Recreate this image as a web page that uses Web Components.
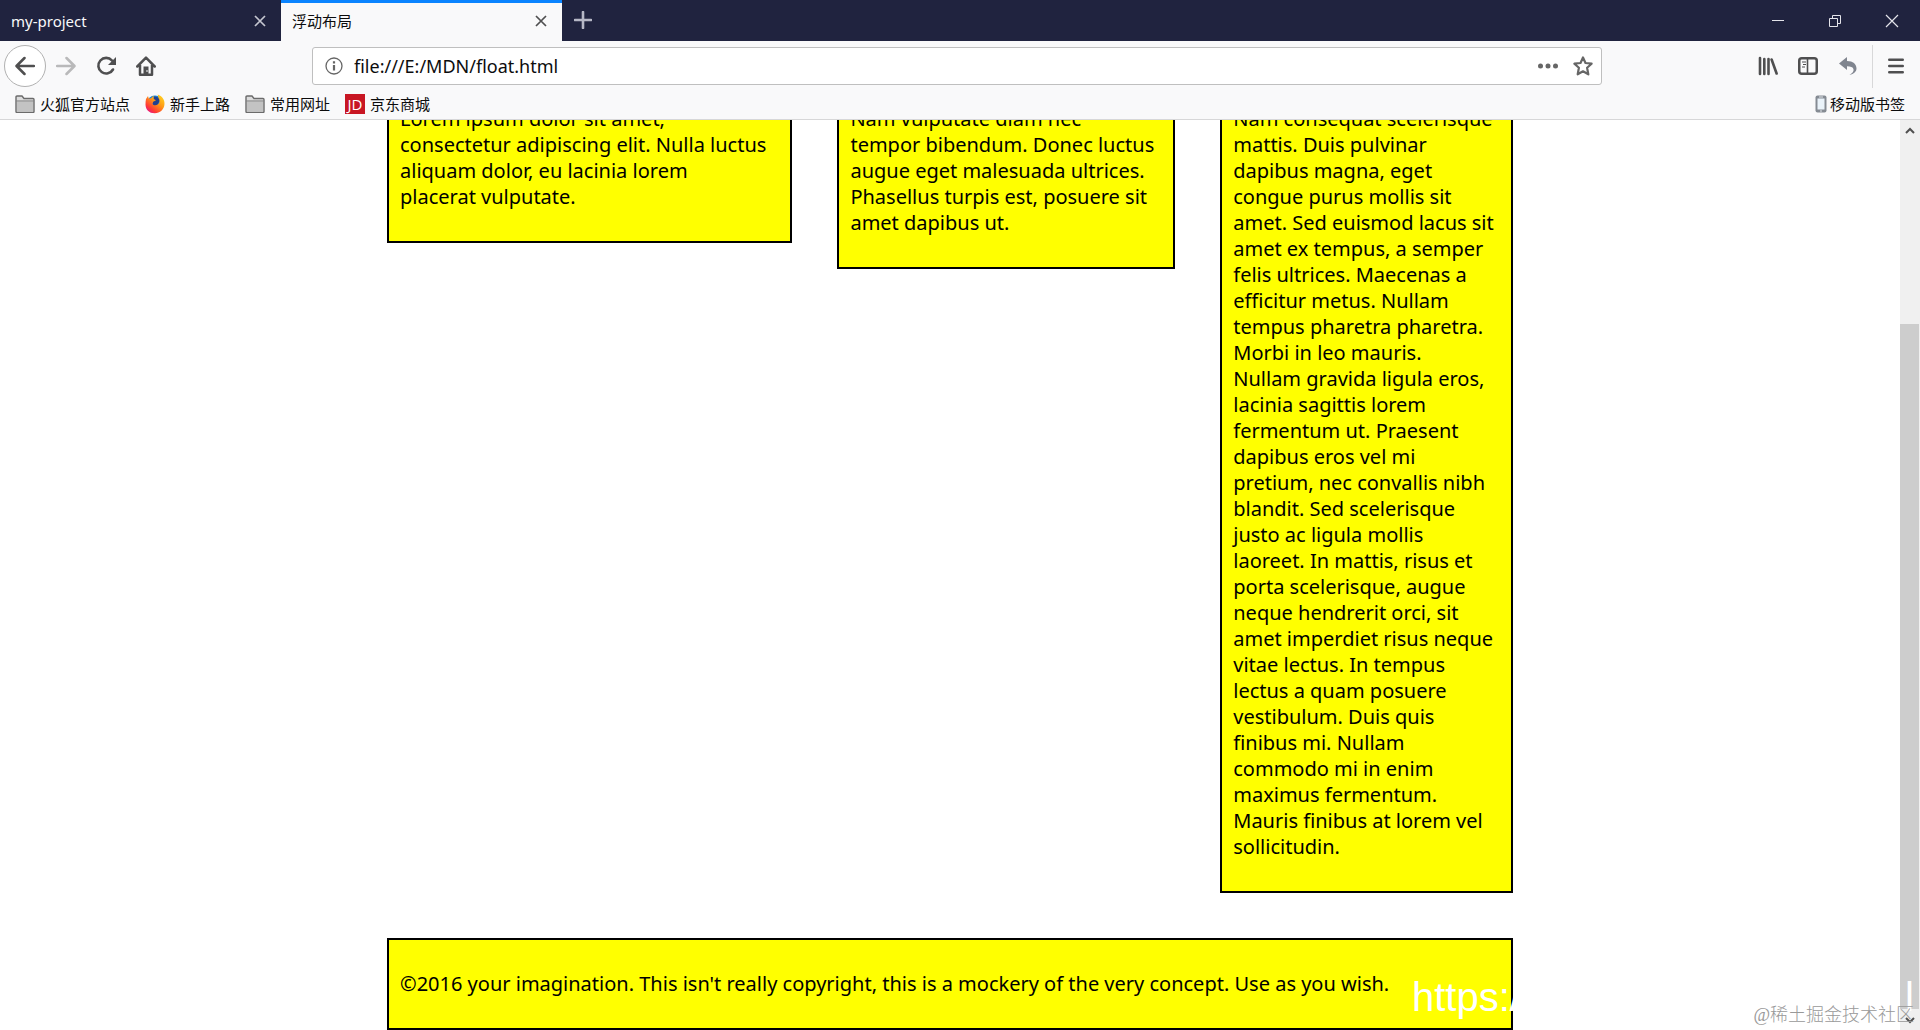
<!DOCTYPE html>
<html lang="zh-CN">
<head>
    <meta charset="utf-8"/>
    <title>浮动布局</title>
    <style>
      body {
        margin: 0;
        font-family: "Noto Sans", "Noto Sans CJK SC", sans-serif;
      }
    </style>
</head>
<body>
    <browser-window></browser-window>

<script>
const icons = {
  close: '<svg width="12" height="12" viewBox="0 0 12 12"><path d="M1 1l10 10M11 1L1 11" stroke="currentColor" stroke-width="1.7" fill="none"/></svg>',
  plus: '<svg width="18" height="18" viewBox="0 0 18 18"><path d="M9 1v16M1 9h16" stroke="currentColor" stroke-width="2.6" stroke-linecap="round"/></svg>',
  minimize: '<svg width="14" height="14" viewBox="0 0 14 14"><path d="M1 6.5h12" stroke="currentColor"/></svg>',
  restore: '<svg width="14" height="14" viewBox="0 0 14 14"><path d="M1.500 4.500h8v8h-8zM4.500 4.500v-3h8v8h-3" stroke="currentColor" fill="none"/></svg>',
  exit: '<svg width="14" height="14" viewBox="0 0 14 14"><path d="M1 1l12 12M13 1L1 13" stroke="currentColor" stroke-width="1.2"/></svg>',
  back: '<svg width="20" height="20" viewBox="0 0 20 20"><path d="M19 10H2M9.500 2L1.500 10l8 8" stroke="currentColor" stroke-width="2.500" fill="none" stroke-linecap="round" stroke-linejoin="round"/></svg>',
  forward: '<svg width="20" height="20" viewBox="0 0 20 20"><path d="M1 10h17M10.500 2l8 8-8 8" stroke="currentColor" stroke-width="2.500" fill="none" stroke-linecap="round" stroke-linejoin="round"/></svg>',
  reload: '<svg width="20" height="20" viewBox="0 0 20 20"><path d="M17 13.500A7.800 7.800 0 1 1 16 4.500" stroke="currentColor" stroke-width="2.600" fill="none" stroke-linecap="round"/><path d="M20 1v8h-8z" fill="currentColor"/></svg>',
  home: '<svg width="20" height="20" viewBox="0 0 20 20"><path d="M1.300 10.500L10 1.700l8.700 8.800M4 9v9.700h12V9" stroke="currentColor" stroke-width="2.500" fill="none" stroke-linecap="round" stroke-linejoin="round"/><path d="M7.500 10.500h5V19h-5z" fill="currentColor"/><path d="M10.500 14h1v2h-1z" fill="#f9f9fa"/></svg>',
  info: '<svg width="18" height="18" viewBox="0 0 18 18"><circle cx="9" cy="9" r="8" stroke="currentColor" stroke-width="1.300" fill="none"/><path d="M9 8v5.500M9 4.300v2.200" stroke="currentColor" stroke-width="2.200"/></svg>',
  dots: '<svg width="20" height="20" viewBox="0 0 20 20"><g fill="currentColor"><circle cx="2.500" cy="10" r="2.500"/><circle cx="10" cy="10" r="2.500"/><circle cx="17.500" cy="10" r="2.500"/></g></svg>',
  star: '<svg width="20" height="20" viewBox="0 0 20 20"><path d="M10 1.500l2.500 5.500 6.100.700-4.500 4.100 1.200 6.500L10 15.300l-5.300 3 1.200-6.500L1.400 7.700l6.100-.700z" stroke="currentColor" stroke-width="2.200" fill="none" stroke-linejoin="round"/></svg>',
  library: '<svg width="20" height="20" viewBox="0 0 20 20"><path d="M2 2v16M6.300 3v15M10.500 3v15M13.600 3.500l5 14" stroke="currentColor" stroke-width="2.600" stroke-linecap="round"/></svg>',
  sidebar: '<svg width="20" height="18" viewBox="0 0 20 18"><rect x="1.250" y="1.250" width="17.500" height="15.500" rx="2.500" stroke="currentColor" stroke-width="2.500" fill="none"/><path d="M9.500 1v16" stroke="currentColor" stroke-width="1.600"/><path d="M4 5h4M5 7.500h3M4 10h3" stroke="currentColor" stroke-width="1.200"/></svg>',
  undo: '<svg width="20" height="20" viewBox="0 0 20 20"><path d="M1 7.500L9 1v4c6 0 9.500 3 9.500 7.500 0 3-2.500 5.500-7 6.500 3-2 4.500-3.500 4-5.800C15 11 12.500 10.300 9 10.300V14z" fill="#80858f"/></svg>',
  menu: '<svg width="16" height="16" viewBox="0 0 16 16"><path d="M1.200 1.700h13.600M1.200 8h13.600M1.200 14.300h13.600" stroke="currentColor" stroke-width="2.400" stroke-linecap="round"/></svg>',
  folder: '<svg width="20" height="18" viewBox="0 0 20 18"><path d="M1 16.500V2q0-1 1-1h5l2 2.500h9q1 0 1 1v12q0 1-1 1H2q-1 0-1-1z" fill="#dcdcdc" stroke="#6b6b6b" stroke-width="1.400"/><path d="M2 7h16v9.500H2z" fill="#c3c3c3"/><path d="M1.500 6h17" stroke="#777"/></svg>',
  firefox: '<svg width="20" height="20" viewBox="0 0 20 20"><defs><linearGradient id="f" x1="1" y1="0" x2="0.200" y2="1"><stop offset="0" stop-color="#ffe226"/><stop offset=".45" stop-color="#ff9a16"/><stop offset=".8" stop-color="#ff3a35"/><stop offset="1" stop-color="#e31587"/></linearGradient></defs><circle cx="10" cy="9.500" r="8" fill="#1684d8"/><path d="M9 2.500q4 0 6 3l-3 7-5 1z" fill="#23408e"/><path d="M1 5l2-3 .700 2.500L6 4.300 8.500 1.500 8.700 5l2.300 1.300-2.800 1.500-.7 2c1 2 3.500 2 5.500.5 2-1.700 2-4 .500-6.300L12.700.5c4.500 1.500 7 5 6.800 9.500-.3 5.500-4.500 9.300-9.700 9.300C4 19.300.5 15.500.5 10.500.5 8.500.700 6.500 1 5z" fill="url(#f)"/></svg>',
  phone: '<svg width="12" height="18" viewBox="0 0 12 18"><rect x=".5" y=".5" width="11" height="17" rx="2" fill="#858b93"/><path d="M2.500 3.500h7v11h-7z" fill="#eaf3fa"/><path d="M4 2h4M5 16h2" stroke="#dfe3e8"/></svg>',
  up: '<svg width="10" height="10" viewBox="0 0 10 10"><path d="M1 7l4-4 4 4" stroke="currentColor" stroke-width="2" fill="none"/></svg>',
  down: '<svg width="10" height="10" viewBox="0 0 10 10"><path d="M1 3l4 4 4-4" stroke="currentColor" stroke-width="2" fill="none"/></svg>'
};

// every element here only needs its markup stamped into an open root
function define(name, html) {
  const template = document.createElement('template');
  template.innerHTML = html;
  customElements.define(name, class extends HTMLElement {
    connectedCallback() {
      if (this.shadowRoot) return;
      this.attachShadow({ mode: 'open' });
      this.shadowRoot.appendChild(template.content.cloneNode(true));
    }
  });
}

class IconButton extends HTMLElement {
  connectedCallback() {
    if (this.shadowRoot) return;
    this.attachShadow({ mode: 'open' });
    this.shadowRoot.innerHTML = `
      <style>
        :host {
          display: flex;
          flex: none;
          width: 40px;
          height: 40px;
          color: #4f4f50;
        }
        button {
          display: flex;
          flex: 1;
          align-items: center;
          justify-content: center;
          padding: 0;
          border: 0;
          border-radius: inherit;
          background: none;
          color: inherit;
        }
      </style>
      <button type="button" aria-label="${this.getAttribute('label')}">${icons[this.getAttribute('icon')]}</button>`;
  }
}
customElements.define('icon-button', IconButton);

define('browser-tab', `
  <style>
    :host {
      display: flex;
      box-sizing: border-box;
      width: 281px;
      align-items: center;
      padding: 0 11px;
      font-size: 15px;
      line-height: 20px;
      color: #f9f9fa;
    }
    :host([active]) {
      border-top: 3px solid #0a84ff;
      padding-bottom: 3px;
      background: #f9f9fa;
      color: #0c0c0d;
    }
    span {
      flex: 1;
    }
    icon-button {
      width: 20px;
      height: 20px;
      color: #c5c6d0;
    }
    :host([active]) icon-button {
      color: #4f4f50;
    }
  </style>
  <span><slot></slot></span>
  <icon-button icon="close" label="关闭标签页"></icon-button>`);

define('tab-strip', `
  <style>
    :host {
      display: flex;
      height: 41px;
      background: #20233f;
    }
    icon-button {
      height: 100%;
      color: #e4e4ea;
    }
    .new {
      width: 42px;
      padding-bottom: 1px;
      box-sizing: border-box;
      color: #b6b7c6;
    }
    .controls {
      display: flex;
      margin-left: auto;
    }
    .controls icon-button {
      width: 57px;
    }
  </style>
  <browser-tab>my-project</browser-tab>
  <browser-tab active>浮动布局</browser-tab>
  <icon-button class="new" icon="plus" label="新标签页"></icon-button>
  <div class="controls">
    <icon-button icon="minimize" label="最小化"></icon-button>
    <icon-button icon="restore" label="还原"></icon-button>
    <icon-button icon="exit" label="关闭"></icon-button>
  </div>`);

define('address-bar', `
  <style>
    :host {
      display: flex;
      flex: 1;
      box-sizing: border-box;
      height: 38px;
      align-items: center;
      padding: 0 1px 0 6px;
      border: 1px solid #bfbfbf;
      border-radius: 3px;
      background: #fff;
    }
    icon-button {
      width: 35px;
      height: 30px;
      color: #666;
    }
    icon-button[icon="info"] {
      width: 30px;
    }
    input {
      flex: 1;
      min-width: 0;
      padding: 0 5px;
      border: 0;
      outline: 0;
      background: none;
      font: 18px/24px "Noto Sans", sans-serif;
      color: #0c0c0d;
    }
  </style>
  <icon-button icon="info" label="网站信息"></icon-button>
  <input type="text" aria-label="地址" value="file:///E:/MDN/float.html">
  <icon-button icon="dots" label="页面操作"></icon-button>
  <icon-button icon="star" label="添加书签"></icon-button>`);

define('nav-bar', `
  <style>
    :host {
      display: flex;
      height: 50px;
      align-items: center;
      padding: 0 4px;
    }
    .back {
      box-sizing: border-box;
      width: 42px;
      height: 42px;
      border: 1px solid #b1b1b1;
      border-radius: 50%;
      background: #fff;
    }
    .off {
      color: #b9b9ba;
    }
    address-bar {
      margin: 0 146px;
    }
    hr {
      width: 1px;
      height: 43px;
      margin: 0 3px 0 4px;
      border: 0;
      background: #d8d8d9;
    }
  </style>
  <icon-button class="back" icon="back" label="后退"></icon-button>
  <icon-button class="off" icon="forward" label="前进"></icon-button>
  <icon-button icon="reload" label="刷新"></icon-button>
  <icon-button icon="home" label="主页"></icon-button>
  <address-bar></address-bar>
  <icon-button icon="library" label="我的足迹"></icon-button>
  <icon-button icon="sidebar" label="侧栏"></icon-button>
  <icon-button icon="undo" label="撤销"></icon-button>
  <hr>
  <icon-button icon="menu" label="打开菜单"></icon-button>`);

define('bookmarks-bar', `
  <style>
    :host {
      display: flex;
      box-sizing: border-box;
      height: 29px;
      align-items: center;
      gap: 15px;
      padding: 0 15px 3px;
      border-bottom: 1px solid #d7d7d8;
      font-size: 15px;
      line-height: 20px;
    }
    a {
      display: flex;
      align-items: center;
      gap: 5px;
      color: #0c0c0d;
      text-decoration: none;
    }
    .mobile {
      margin-left: auto;
      gap: 3px;
    }
    .jd {
      width: 20px;
      background: #c81623;
      color: #fff;
      font: 15px/20px "Open Sans", sans-serif;
      text-align: center;
    }
  </style>
  <a href="#">${icons.folder}火狐官方站点</a>
  <a href="#">${icons.firefox}新手上路</a>
  <a href="#">${icons.folder}常用网址</a>
  <a href="#"><span class="jd">JD</span>京东商城</a>
  <a href="#" class="mobile">${icons.phone}移动版书签</a>`);

define('scroll-bar', `
  <style>
    :host {
      display: flex;
      flex-direction: column;
      width: 20px;
      background: #f0f0f0;
    }
    icon-button {
      width: 20px;
      height: 21px;
      color: #505050;
    }
    .before {
      flex: 183;
    }
    .thumb {
      flex: 686;
      margin-right: 1px;
      background: #cdcdcd;
    }
  </style>
  <icon-button icon="up" label="向上滚动"></icon-button>
  <div class="before"></div>
  <div class="thumb"></div>
  <icon-button icon="down" label="向下滚动"></icon-button>`);

define('text-box', `
  <style>
    :host {
      display: block;
      box-sizing: border-box;
      padding: 11px;
      border: 2px solid #000;
      background: #ff0;
      font-size: 20px;
      line-height: 26px;
      color: #000;
    }
    p {
      margin: 20px 0;
    }
  </style>
  <p><slot></slot></p>`);

define('float-page', `
  <style>
    :host {
      display: flex;
      flex-direction: column;
      justify-content: flex-end;
      align-items: center;
      overflow: hidden;
      background: #fff;
    }
    main {
      display: flex;
      flex-direction: column;
      gap: 45px;
      width: 90%;
      max-width: 1126px;
    }
    .columns {
      display: flex;
      justify-content: space-between;
      align-items: flex-start;
    }
    .one { width: 36%; }
    .two { width: 30%; }
    .three { width: 26%; }
  </style>
  <main>
    <div class="columns">
      <text-box class="one">Lorem ipsum dolor sit amet,<br>consectetur adipiscing elit. Nulla luctus<br>aliquam dolor, eu lacinia lorem<br>placerat vulputate.</text-box>
      <text-box class="two">Nam vulputate diam nec<br>tempor bibendum. Donec luctus<br>augue eget malesuada ultrices.<br>Phasellus turpis est, posuere sit<br>amet dapibus ut.</text-box>
      <text-box class="three">Nam consequat scelerisque<br>mattis. Duis pulvinar<br>dapibus magna, eget<br>congue purus mollis sit<br>amet. Sed euismod lacus sit<br>amet ex tempus, a semper<br>felis ultrices. Maecenas a<br>efficitur metus. Nullam<br>tempus pharetra pharetra.<br>Morbi in leo mauris.<br>Nullam gravida ligula eros,<br>lacinia sagittis lorem<br>fermentum ut. Praesent<br>dapibus eros vel mi<br>pretium, nec convallis nibh<br>blandit. Sed scelerisque<br>justo ac ligula mollis<br>laoreet. In mattis, risus et<br>porta scelerisque, augue<br>neque hendrerit orci, sit<br>amet imperdiet risus neque<br>vitae lectus. In tempus<br>lectus a quam posuere<br>vestibulum. Duis quis<br>finibus mi. Nullam<br>commodo mi in enim<br>maximus fermentum.<br>Mauris finibus at lorem vel<br>sollicitudin.</text-box>
    </div>
    <text-box>©2016 your imagination. This isn't really copyright, this is a mockery of the very concept. Use as you wish.</text-box>
  </main>`);

define('page-watermark', `
  <style>
    :host {
      position: absolute;
      right: 6px;
      bottom: 2px;
      width: 502px;
      pointer-events: none;
    }
    .url {
      display: flex;
      justify-content: space-between;
      padding-bottom: 8px;
      font: 40px/46px "Liberation Sans", sans-serif;
      color: #fff;
    }
    .site {
      position: absolute;
      right: 0;
      bottom: 0;
      font: 18px/26px "Liberation Serif", "Noto Sans CJK SC", serif;
      font-weight: 300;
      color: #999;
      white-space: nowrap;
    }
  </style>
  <div class="url"><span>https:/</span><span>l</span></div>
  <div class="site">@稀土掘金技术社区</div>`);

define('browser-window', `
  <style>
    :host {
      position: relative;
      display: flex;
      flex-direction: column;
      height: 100vh;
      overflow: hidden;
      background: #f9f9fa;
    }
    .view {
      display: flex;
      flex: 1;
      min-height: 0;
    }
    float-page {
      flex: 1;
    }
  </style>
  <tab-strip></tab-strip>
  <nav-bar></nav-bar>
  <bookmarks-bar></bookmarks-bar>
  <div class="view">
    <float-page></float-page>
    <scroll-bar></scroll-bar>
  </div>
  <page-watermark></page-watermark>`);

</script>
</body>
</html>
